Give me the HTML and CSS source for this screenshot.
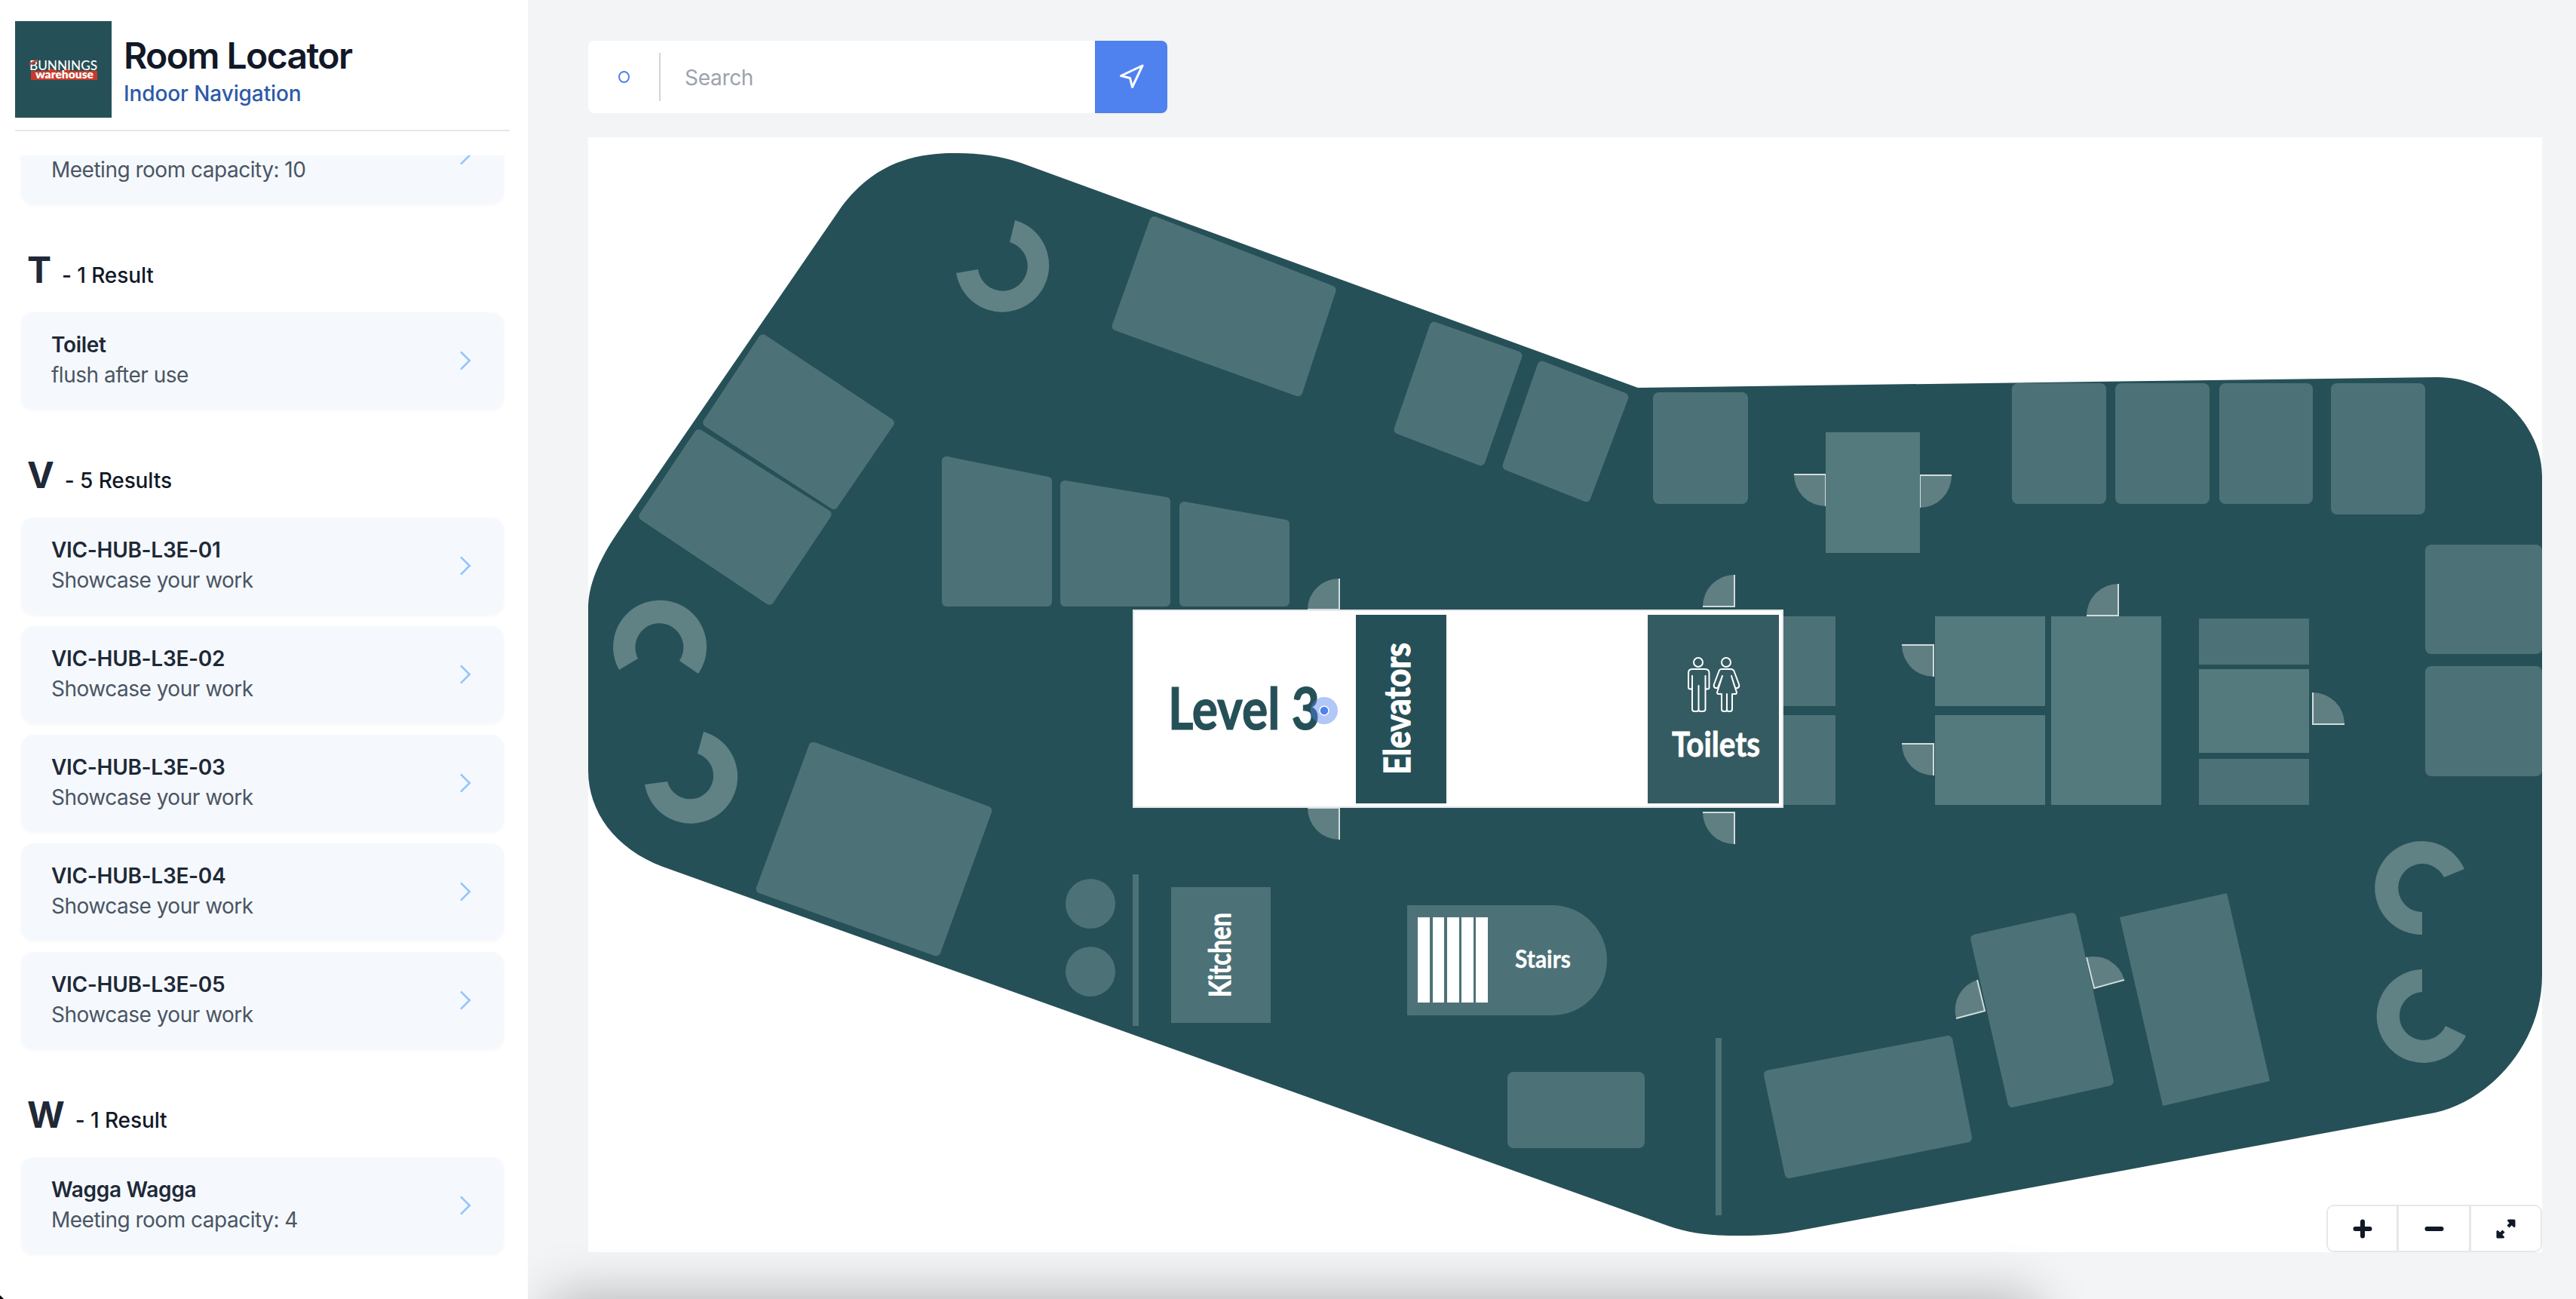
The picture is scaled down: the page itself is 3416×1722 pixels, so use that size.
FILE: index.html
```html
<!DOCTYPE html>
<html lang="en">
<head>
<meta charset="utf-8">
<title>Room Locator</title>
<link rel="stylesheet" href="styles.css">
</head>
<body>
<aside class="sidebar">
  <header class="brand">
    <svg class="logo" viewBox="0 0 128 128" aria-label="Bunnings Warehouse">
      <rect class="logo-bg" width="128" height="128"/>
      <path class="logo-red" d="M21 66 H44 L46 62 L56 66 H64 L68 62 L72 66 H109 V78 H21 Z"/>
      <text class="logo-top" x="19" y="65" textLength="90" lengthAdjust="spacingAndGlyphs">BUNNINGS</text>
      <path class="logo-red" d="M19 56 L30 50 V53 L19 59 Z"/>
      <text class="logo-bottom" x="27" y="76" textLength="77" lengthAdjust="spacingAndGlyphs">warehouse</text>
    </svg>
    <div class="brand-text">
      <h1 class="brand-title">Room Locator</h1>
      <p class="brand-sub">Indoor Navigation</p>
    </div>
  </header>

  <div class="results">
    <div class="results-inner">
      <section class="group">
        <a class="card">
          <div class="card-text"><span class="card-name">Wollongong</span><span class="card-desc">Meeting room capacity: 10</span></div>
          <svg class="chev" viewBox="0 0 24 24"><path d="M9 5l7 7-7 7"/></svg>
        </a>
      </section>

      <section class="group">
        <h2 class="group-head"><span class="letter">T</span><span class="count">- 1 Result</span></h2>
        <a class="card">
          <div class="card-text"><span class="card-name">Toilet</span><span class="card-desc">flush after use</span></div>
          <svg class="chev" viewBox="0 0 24 24"><path d="M9 5l7 7-7 7"/></svg>
        </a>
      </section>

      <section class="group">
        <h2 class="group-head"><span class="letter">V</span><span class="count">- 5 Results</span></h2>
        <a class="card">
          <div class="card-text"><span class="card-name">VIC-HUB-L3E-01</span><span class="card-desc">Showcase your work</span></div>
          <svg class="chev" viewBox="0 0 24 24"><path d="M9 5l7 7-7 7"/></svg>
        </a>
        <a class="card">
          <div class="card-text"><span class="card-name">VIC-HUB-L3E-02</span><span class="card-desc">Showcase your work</span></div>
          <svg class="chev" viewBox="0 0 24 24"><path d="M9 5l7 7-7 7"/></svg>
        </a>
        <a class="card">
          <div class="card-text"><span class="card-name">VIC-HUB-L3E-03</span><span class="card-desc">Showcase your work</span></div>
          <svg class="chev" viewBox="0 0 24 24"><path d="M9 5l7 7-7 7"/></svg>
        </a>
        <a class="card">
          <div class="card-text"><span class="card-name">VIC-HUB-L3E-04</span><span class="card-desc">Showcase your work</span></div>
          <svg class="chev" viewBox="0 0 24 24"><path d="M9 5l7 7-7 7"/></svg>
        </a>
        <a class="card">
          <div class="card-text"><span class="card-name">VIC-HUB-L3E-05</span><span class="card-desc">Showcase your work</span></div>
          <svg class="chev" viewBox="0 0 24 24"><path d="M9 5l7 7-7 7"/></svg>
        </a>
      </section>

      <section class="group">
        <h2 class="group-head"><span class="letter">W</span><span class="count">- 1 Result</span></h2>
        <a class="card">
          <div class="card-text"><span class="card-name">Wagga Wagga</span><span class="card-desc">Meeting room capacity: 4</span></div>
          <svg class="chev" viewBox="0 0 24 24"><path d="M9 5l7 7-7 7"/></svg>
        </a>
      </section>
    </div>
  </div>
</aside>

<main class="main">
  <form class="search">
    <span class="search-origin"><span class="origin-dot"></span></span>
    <span class="search-input">Search</span>
    <button class="search-go" type="button">
      <svg class="go-icon" viewBox="0 0 24 24"><polygon points="3 11 22 2 13 21 11 13 3 11"/></svg>
    </button>
  </form>

  <div class="map">
    <svg class="plan" viewBox="780 182 2591 1478" role="img" aria-label="Level 3 floor plan">
      <path class="floor" d="M1116 274 C1160 215 1215 203 1265 203 C1295 203 1325 206 1354 216 L2172 514 L3232 500 C3310 500 3371 565 3371 631 L3371 1293 C3371 1385 3300 1460 3229 1475 L2382 1632 C2350 1638 2325 1638 2300 1638 C2270 1638 2240 1635 2212 1625 L879 1149 C815 1125 780 1075 780 1022 L780 806 C780 770 800 733 823 700 Z"/>

      <!-- rotated rooms, top left -->
      <polygon class="room" points="1530.5,292.8 1765.6,384.5 1721.2,519.3 1480.7,432.4"/>
      <polygon class="room" points="1011.7,449.3 1179.7,560.7 1105.4,669 938.3,560.3"/>
      <polygon class="room" points="926.7,575.2 1096.5,681.8 1020.4,795.7 853.3,684.3"/>
      <polygon class="room" points="1255,611 1389,638 1389,798 1255,798"/>
      <polygon class="room" points="1412,643 1546,665 1546,798 1412,798"/>
      <polygon class="room" points="1570,671 1704,695 1704,798 1570,798"/>
      <polygon class="room" points="1901.7,432.6 2012.4,471.7 1963.4,611.2 1854.6,569.5"/>
      <polygon class="room" points="2044.7,484.6 2153.4,526.7 2103.4,659.2 1998.6,617.5"/>
      <polygon class="room" points="1078.5,989.7 1309.3,1074.6 1241.5,1261.3 1008.7,1178.4"/>

      <!-- straight rooms, top right -->
      <rect class="room-flat" x="2192" y="520" width="126" height="148" rx="8"/>
      <rect class="room-flat" x="2668" y="508" width="125" height="160" rx="8"/>
      <rect class="room-flat" x="2805" y="508" width="125" height="160" rx="8"/>
      <rect class="room-flat" x="2943" y="508" width="124" height="160" rx="8"/>
      <rect class="room-flat" x="3091" y="508" width="125" height="174" rx="8"/>
      <rect class="room-flat" x="3216" y="722" width="155" height="145" rx="8"/>
      <rect class="room-flat" x="3216" y="883" width="155" height="146" rx="8"/>

      <!-- doors -->
      <g class="door">
        <path class="door-leaf" d="M1776 767 A42 41 0 0 0 1734 808 L1776 808 Z"/>
        <path class="door-edge" d="M1776 767 V808 H1734"/>
        <path class="door-leaf" d="M1776 1113 A42 42 0 0 1 1734 1071 L1776 1071 Z"/>
        <path class="door-edge" d="M1776 1113 V1071 H1734"/>
        <path class="door-leaf" d="M2300 762 A42 42 0 0 0 2258 804 L2300 804 Z"/>
        <path class="door-edge" d="M2300 762 V804 H2258"/>
        <path class="door-leaf" d="M2300 1119 A42 42 0 0 1 2258 1077 L2300 1077 Z"/>
        <path class="door-edge" d="M2300 1119 V1077 H2258"/>
        <path class="door-leaf" d="M2421 671 A42 42 0 0 1 2379 629 L2421 629 Z"/>
        <path class="door-edge" d="M2421 671 V629 H2379"/>
        <path class="door-leaf" d="M2546 673 A42 43 0 0 0 2588 630 L2546 630 Z"/>
        <path class="door-edge" d="M2546 673 V630 H2588"/>
        <path class="door-leaf" d="M2809 774 A42 42 0 0 0 2767 816 L2809 816 Z"/>
        <path class="door-edge" d="M2809 774 V816 H2767"/>
        <path class="door-leaf" d="M2564 897 A42 42 0 0 1 2522 855 L2564 855 Z"/>
        <path class="door-edge" d="M2564 897 V855 H2522"/>
        <path class="door-leaf" d="M2564 1028 A42 42 0 0 1 2522 986 L2564 986 Z"/>
        <path class="door-edge" d="M2564 1028 V986 H2522"/>
        <path class="door-leaf" d="M3067 918 A42 42 0 0 1 3109 960 L3067 960 Z"/>
        <path class="door-edge" d="M3067 918 V960 H3109"/>
        <path class="door-leaf" d="M2622 1299 A42 42 0 0 0 2594 1350 L2632 1340 Z"/>
        <path class="door-edge" d="M2622 1299 L2632 1340 L2594 1350"/>
        <path class="door-leaf" d="M2767 1269 A42 42 0 0 1 2817 1299 L2777 1310 Z"/>
        <path class="door-edge" d="M2767 1269 L2777 1310 L2817 1299"/>
      </g>

      <!-- central block -->
      <rect class="room-sharp" x="2340" y="817" width="94" height="119"/>
      <rect class="room-sharp" x="2340" y="948" width="94" height="119"/>
      <rect class="room-light" x="2421" y="573" width="125" height="160"/>
      <rect class="room-light" x="2566" y="817" width="146" height="119"/>
      <rect class="room-light" x="2566" y="948" width="146" height="119"/>
      <rect class="room-light" x="2720" y="817" width="146" height="250"/>
      <rect class="room-sharp" x="2916" y="820" width="146" height="61"/>
      <rect class="room-light" x="2916" y="887" width="146" height="111"/>
      <rect class="room-sharp" x="2916" y="1006" width="146" height="61"/>

      <!-- seating arcs -->
      <path class="arc" d="M1346 292 A62 62 0 1 1 1268 362 L1297 357 A33 33 0 1 0 1339 321 Z"/>
      <path class="arc" d="M821 888 A62 62 0 1 1 926 893 L901 876 A32 32 0 1 0 846 873 Z"/>
      <path class="arc" d="M933 970 A62 62 0 1 1 855 1040 L885 1036 A31 31 0 1 0 925 999 Z"/>
      <path class="arc" d="M3268 1152 A62 62 0 1 0 3212 1239 L3212 1209 A32 32 0 1 1 3241 1163 Z"/>
      <path class="arc" d="M3212 1285 A62 62 0 1 0 3270 1373 L3243 1360 A32 32 0 1 1 3212 1315 Z"/>

      <!-- lower rooms -->
      <circle class="room-flat" cx="1446" cy="1198" r="33"/>
      <circle class="room-flat" cx="1446" cy="1288" r="33"/>
      <rect class="room-flat" x="1502" y="1159" width="8" height="201"/>
      <rect class="room-flat" x="1553" y="1176" width="132" height="180"/>
      <text class="label label-kitchen" transform="translate(1632 1322) rotate(-90)" textLength="112" lengthAdjust="spacingAndGlyphs">Kitchen</text>
      <path class="room-flat" d="M1866 1200 H2058 A73 73 0 0 1 2058 1346 H1866 Z"/>
      <rect class="stair" x="1880" y="1216" width="16" height="113"/>
      <rect class="stair" x="1900" y="1216" width="15" height="113"/>
      <rect class="stair" x="1919" y="1216" width="16" height="113"/>
      <rect class="stair" x="1938" y="1216" width="16" height="113"/>
      <rect class="stair" x="1957" y="1216" width="16" height="113"/>
      <text class="label label-stairs" x="2009" y="1283" textLength="74" lengthAdjust="spacingAndGlyphs">Stairs</text>
      <rect class="room-flat" x="1999" y="1421" width="182" height="101" rx="8"/>
      <rect class="room-flat" x="2275" y="1376" width="8" height="235"/>
      <polygon class="room" points="2345,1424.7 2583.3,1379 2609,1508.3 2372.7,1555.9"/>
      <polygon class="room" points="2619.2,1244.6 2747.5,1216.1 2796.8,1433.4 2668.5,1461.9"/>
      <polygon class="room-flat" points="2811,1216 2953,1184 3010,1433 2868,1466"/>

      <!-- core -->
      <rect class="core" x="1503" y="809" width="861" height="261"/>
      <text class="label-level" x="1549" y="967" textLength="201" lengthAdjust="spacingAndGlyphs">Level 3</text>
      <rect class="lift" x="1798" y="815" width="120" height="250"/>
      <text class="label label-lift" transform="translate(1870 1027) rotate(-90)" textLength="175" lengthAdjust="spacingAndGlyphs">Elevators</text>
      <rect class="wc" x="2185" y="815" width="174" height="250"/>
      <circle class="person" cx="2252" cy="878" r="6"/>
      <circle class="person" cx="2289" cy="878" r="6"/>
      <path class="person" d="M2244 887 H2261 Q2266.5 887 2266.5 892 V911 Q2266.5 913.5 2264 913.5 Q2261.5 913.5 2261.5 911 V896 V940 Q2261.5 943 2258 943 H2255 Q2252.5 943 2252.5 940 V909 V940 Q2252.5 943 2250 943 H2247 Q2244 943 2244 940 V896 V911 Q2244 913.5 2241.5 913.5 Q2239 913.5 2239 911 V892 Q2239 887 2244 887 Z"/>
      <path class="person" d="M2283 887 H2295 Q2299 887 2300 891 L2306 907 Q2307 911 2304 912 Q2301 913 2300 909 L2296 896 L2303 918 Q2303 920 2301 920 H2297 V940 Q2297 943 2294 943 H2292 Q2290 943 2290 940 V920 V940 Q2290 943 2288 943 H2286 Q2283 943 2283 940 V920 H2279 Q2277 920 2277 918 L2284 896 L2279 909 Q2278 913 2275 912 Q2272 911 2273 907 L2279 891 Q2280 887 2283 887 Z"/>
      <text class="label label-wc" x="2217" y="1003" textLength="117" lengthAdjust="spacingAndGlyphs">Toilets</text>

      <!-- you are here -->
      <circle class="here-halo" cx="1756" cy="942" r="18"/>
      <circle class="here-dot" cx="1756" cy="942" r="6"/>
    </svg>

    <div class="zoom">
      <button class="zoom-btn" type="button"><svg class="zoom-icon" viewBox="0 0 28 28"><path d="M14 4.5 V23.5 M4.5 14 H23.5"/></svg></button>
      <button class="zoom-btn" type="button"><svg class="zoom-icon" viewBox="0 0 28 28"><path d="M4.5 14 H23.5"/></svg></button>
      <button class="zoom-btn" type="button"><svg class="zoom-icon" viewBox="0 0 28 28"><path class="zoom-shaft" d="M21 7 L17 11 M11 17 L7 21"/><path class="zoom-fill" d="M25 3 L25 10.5 L17.5 3 Z M3 25 L3 17.5 L10.5 25 Z"/></svg></button>
    </div>
  </div>
</main>

<div class="under-shadow"></div>
<div class="window-corner"></div>
</body>
</html>
```

FILE: styles.css
```css
* { box-sizing: border-box; }

html, body {
  height: 100%;
  margin: 0;
}

body {
  display: flex;
  position: relative;
  overflow: hidden;
  background: #f3f4f6;
  font-family: Inter, "Liberation Sans", sans-serif;
  color: #111827;
}

/* Sidebar */
.sidebar {
  position: relative;
  z-index: 2;
  width: 700px;
  flex: none;
  display: flex;
  flex-direction: column;
  background: #fff;
}

.brand {
  display: flex;
  align-items: center;
  gap: 16px;
  margin: 0 24px 0 20px;
  padding: 28px 0 16px;
  border-bottom: 2px solid #e5e7eb;
}

.logo {
  display: block;
  width: 128px;
  height: 128px;
  flex: none;
}

.logo-bg { fill: #265057; }
.logo-red { fill: #c83a2a; }

.logo-top {
  font: 500 18px "Lato", sans-serif;
  fill: #fff;
}

.logo-bottom {
  font: 800 15px "Lato", sans-serif;
  fill: #fff;
}

.brand-text { padding-top: 6px; }

.brand-title {
  margin: 0;
  font-size: 48px;
  line-height: 56px;
  font-weight: 600;
  letter-spacing: -1.6px;
  color: #111827;
}

.brand-sub {
  margin: 2px 0 0;
  font-size: 28px;
  line-height: 40px;
  font-weight: 500;
  letter-spacing: -0.1px;
  color: #2d5aa7;
}

.results {
  flex: 1;
  min-height: 0;
  margin-top: 32px;
  overflow: hidden;
}

.results-inner {
  margin-top: -64px;
  padding: 0 32px 0 28px;
}

.group { display: flex; flex-direction: column; gap: 16px; }
.group + .group { margin-top: 52px; }

.group-head {
  display: flex;
  align-items: baseline;
  gap: 14px;
  margin: 0 0 4px;
  padding-left: 8px;
  line-height: 72px;
  height: 72px;
  font-weight: 400;
}

.letter {
  font-size: 48px;
  font-weight: 700;
  color: #1f2937;
}

.count {
  position: relative;
  font-size: 28px;
  font-weight: 500;
  letter-spacing: -0.1px;
  color: #111827;
}

.card {
  display: flex;
  align-items: center;
  justify-content: space-between;
  height: 128px;
  padding: 24px 32px 24px 40px;
  border-radius: 16px;
  background: #f5f9fe;
  box-shadow: 0 2px 4px rgba(0, 0, 0, 0.04);
}

.card-text { display: flex; flex-direction: column; margin-top: -2px; }

.card-name {
  font-size: 28px;
  line-height: 40px;
  font-weight: 600;
  letter-spacing: -0.3px;
  color: #1f2937;
}

.card-desc {
  font-size: 28px;
  line-height: 40px;
  letter-spacing: -0.5px;
  color: #4b5563;
}

.chev {
  width: 40px;
  height: 40px;
  flex: none;
  fill: none;
  stroke: #93c5fd;
  stroke-width: 1.6;
}

/* Main column */
.main {
  flex: 1;
  min-width: 0;
  display: flex;
  flex-direction: column;
  gap: 32px;
  padding: 54px 45px 62px 80px;
}

.search {
  display: flex;
  align-items: center;
  width: 768px;
  height: 96px;
  flex: none;
  border-radius: 8px;
  background: #fff;
  overflow: hidden;
}

.search-origin {
  display: flex;
  align-items: center;
  justify-content: center;
  width: 96px;
  height: 64px;
  flex: none;
  border-right: 2px solid #d1d5db;
}

.origin-dot {
  width: 15px;
  height: 16px;
  border: 2px solid #4f82ee;
  border-radius: 50%;
}

.search-input {
  flex: 1;
  padding: 2px 0 0 32px;
  font-size: 28px;
  letter-spacing: -0.3px;
  color: #9ca3af;
}

.search-go {
  display: flex;
  align-items: center;
  justify-content: center;
  width: 96px;
  height: 96px;
  flex: none;
  padding: 0;
  border: 0;
  background: #4f82ee;
}

.go-icon {
  width: 36px;
  height: 36px;
  fill: none;
  stroke: #fff;
  stroke-width: 2;
  stroke-linejoin: round;
}

/* Map */
.map {
  position: relative;
  flex: 1;
  min-height: 0;
  background: #fff;
}

.plan {
  display: block;
  width: 100%;
  height: 100%;
}

.floor { fill: #265057; }

.room {
  fill: #4c7277;
  stroke: #4c7277;
  stroke-width: 12;
  stroke-linejoin: round;
}

.room-flat, .room-sharp { fill: #4c7277; }
.room-light { fill: #557a7d; }
.arc { fill: #608285; }

.door-leaf { fill: #5f7f83; }

.door-edge {
  fill: none;
  stroke: #d3dbdc;
  stroke-width: 2;
}

.stair { fill: #fff; }

.label {
  font-family: Lato, "Liberation Sans", sans-serif;
  font-weight: 700;
  fill: #fff;
  stroke: #fff;
  stroke-width: 0.8;
}

.label-kitchen { font-size: 40px; }
.label-stairs { font-size: 32px; stroke-width: 0.3; }
.label-lift { font-size: 48px; stroke-width: 1.2; }
.label-wc { font-size: 46px; }

.core {
  fill: #fff;
  stroke: #e5e7eb;
  stroke-width: 2;
}

.label-level {
  font-family: Lato, "Liberation Sans", sans-serif;
  font-weight: 700;
  font-size: 76px;
  fill: #265057;
  stroke: #265057;
  stroke-width: 1.2;
}

.lift { fill: #265057; }
.wc { fill: #355b62; }

.person {
  fill: none;
  stroke: #fff;
  stroke-width: 2;
  stroke-linejoin: round;
}

.here-halo { fill: rgba(79, 130, 238, 0.45); }

.here-dot {
  fill: #4f82ee;
  stroke: #fff;
  stroke-width: 1.5;
}

/* Zoom buttons, floating over the map */
.zoom {
  position: absolute;
  right: 0;
  bottom: 0;
  display: grid;
  grid-template-columns: 91px 96px 95px;
  width: 286px;
  height: 63px;
  border: 2px solid #e5e7eb;
  border-radius: 10px;
  background: #fff;
  overflow: hidden;
}

.zoom-btn {
  display: flex;
  align-items: center;
  justify-content: center;
  padding: 0;
  border: 0;
  background: #fff;
}

.zoom-btn + .zoom-btn { border-left: 3px solid #e5e7eb; }

.zoom-icon {
  width: 28px;
  height: 28px;
  fill: none;
  stroke: #111827;
  stroke-width: 6;
  stroke-linecap: round;
}

.zoom-shaft { stroke-width: 4.5; stroke-linecap: butt; }

.zoom-fill {
  fill: #111827;
  stroke: #111827;
  stroke-width: 3;
  stroke-linejoin: round;
}

/* Page decoration */
.under-shadow {
  position: absolute;
  left: 750px;
  top: 1740px;
  width: 1930px;
  height: 60px;
  background: rgba(0, 0, 0, 0.35);
  box-shadow: 0 0 70px 20px rgba(0, 0, 0, 0.28);
}

.window-corner {
  position: absolute;
  left: 0;
  bottom: 0;
  z-index: 3;
  width: 5px;
  height: 5px;
  background: #000;
  clip-path: polygon(0 0, 100% 100%, 0 100%);
}
```
